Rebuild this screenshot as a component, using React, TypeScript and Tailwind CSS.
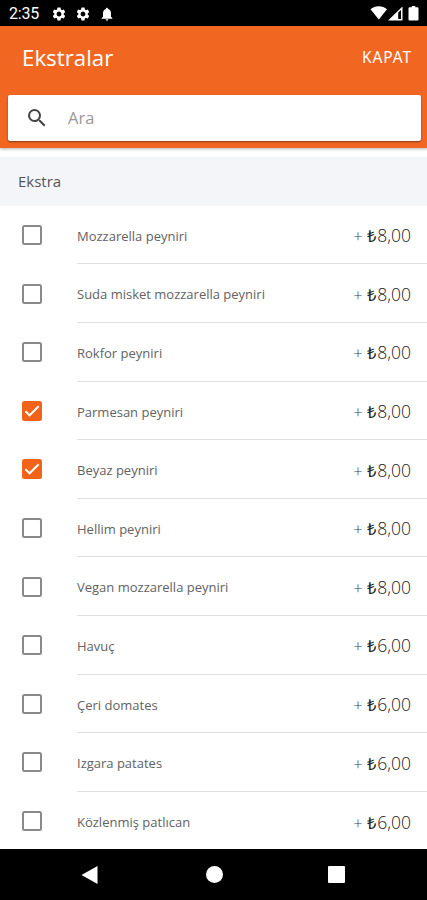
import { useState } from "react";
import { clsx } from "clsx";
import { MdNotifications, MdSearch, MdSettings } from "react-icons/md";

interface Extra {
  name: string;
  price: string;
}

const EXTRAS: Extra[] = [
  { name: "Mozzarella peyniri", price: "8,00" },
  { name: "Suda misket mozzarella peyniri", price: "8,00" },
  { name: "Rokfor peyniri", price: "8,00" },
  { name: "Parmesan peyniri", price: "8,00" },
  { name: "Beyaz peyniri", price: "8,00" },
  { name: "Hellim peyniri", price: "8,00" },
  { name: "Vegan mozzarella peyniri", price: "8,00" },
  { name: "Havuç", price: "6,00" },
  { name: "Çeri domates", price: "6,00" },
  { name: "Izgara patates", price: "6,00" },
  { name: "Közlenmiş patlıcan", price: "6,00" },
];

function StatusBar() {
  return (
    <div className="flex h-[26px] shrink-0 items-center justify-between bg-black pl-[9px] pr-[7px] text-white">
      <div className="flex items-center pt-[2px]">
        <span className="w-[41.5px] font-['Roboto',sans-serif] text-[16px] leading-none tracking-[-0.2px]">
          2:35
        </span>
        <MdSettings className="mr-2 h-4 w-4" />
        <MdSettings className="mr-2 h-4 w-4" />
        <MdNotifications className="h-4 w-4" />
      </div>
      <svg width="50" height="16" viewBox="0 0 50 16" fill="currentColor">
        <path d="M0.5 4.3C5 0.2 12.5 0.2 17 4.3L8.8 14.6Z" />
        <path d="M18 15.5L32.5 1.5V15.5Z" />
        <path d="M28.2 7.5L31 5V14H28.2Z" fill="#000" />
        <path d="M41.7 1h3.6v1.3h2.2q1 0 1 1v11.2q0 1-1 1h-8q-1 0-1-1V3.3q0-1 1-1h2.2z" />
      </svg>
    </div>
  );
}

function Header() {
  return (
    <header className="relative flex h-[122px] shrink-0 flex-col bg-[#f16722] px-2 shadow-[0_1px_3px_rgba(0,0,0,0.3)]">
      <div className="flex h-[69px] items-center justify-between pl-[14px] pr-[7px] pb-[7px] text-white">
        <h1 className="pt-[2px] text-[22.3px] leading-none">Ekstralar</h1>
        <button
          type="button"
          className="pt-[2px] font-['Noto_Sans',sans-serif] text-[15.5px] leading-none tracking-[0.9px]"
        >
          KAPAT
        </button>
      </div>
      <label className="mr-[-2px] flex h-[46px] items-center rounded-[2px] bg-white pl-[17px] shadow-[0_1px_2px_rgba(0,0,0,0.45)]">
        <MdSearch className="h-6 w-6 text-[#444]" />
        <input
          placeholder="Ara"
          className="ml-[19px] w-60 text-[16.5px] text-[#444] outline-none placeholder:text-[#999]"
        />
      </label>
    </header>
  );
}

interface CheckBoxProps {
  checked: boolean;
  onChange: () => void;
}

function CheckBox({ checked, onChange }: CheckBoxProps) {
  return (
    <button
      type="button"
      role="checkbox"
      aria-checked={checked}
      onClick={onChange}
      className={clsx(
        "h-5 w-5 shrink-0 rounded-[2.5px]",
        checked ? "bg-[#f16318]" : "border-2 border-[#8a8a8a] bg-white"
      )}
    >
      {checked && (
        <svg viewBox="0 0 20 20" fill="none" stroke="#fff" strokeWidth="2">
          <path d="M3.4 10.3L7.6 14.3L16.7 5.3" />
        </svg>
      )}
    </button>
  );
}

function NavBar() {
  return (
    <nav className="flex h-[51px] shrink-0 items-center bg-black text-white">
      <svg className="ml-[81px]" width="18" height="20" viewBox="0 0 18 20" fill="currentColor">
        <path d="M0.5 10L16.5 1V19Z" />
      </svg>
      <div className="ml-[106.5px] h-[17px] w-[17px] rounded-full bg-white" />
      <div className="ml-[105.5px] h-[17px] w-[17px] rounded-[1px] bg-white" />
    </nav>
  );
}

export default function App() {
  const [selected, setSelected] = useState<number[]>([3, 4]);

  const toggle = (index: number) =>
    setSelected((prev) =>
      prev.includes(index) ? prev.filter((i) => i !== index) : [...prev, index]
    );

  return (
    <div className="flex h-[900px] w-[427px] flex-col overflow-hidden bg-white font-['Open_Sans',sans-serif]">
      <StatusBar />
      <Header />

      <h2 className="mt-[9px] flex h-[49px] shrink-0 items-center bg-[#f4f5f9] pl-[18px] text-[15px] text-[#555]">
        Ekstra
      </h2>

      <ul className="mt-[-0.2px] flex min-h-0 flex-1 flex-col">
        {EXTRAS.map((extra, index) => (
          <li key={extra.name} className="flex h-[58.6px] shrink-0 items-center pl-[22px]">
            <CheckBox checked={selected.includes(index)} onChange={() => toggle(index)} />
            <div
              className={clsx(
                "ml-[35px] flex h-full flex-1 items-center justify-between pr-4",
                index < EXTRAS.length - 1 && "border-b border-[#dedede]"
              )}
            >
              <span className="pt-[4px] text-[13px] text-[#626262]">{extra.name}</span>
              <span className="flex items-baseline pt-[2px] text-[17.5px] font-light text-[#222]">
                <span className="mr-[4.5px] text-[16.5px] text-[#444]">+</span>
                <span className="mr-px text-[16.5px] font-medium">₺</span>
                {extra.price}
              </span>
            </div>
          </li>
        ))}
      </ul>

      <NavBar />
    </div>
  );
}
